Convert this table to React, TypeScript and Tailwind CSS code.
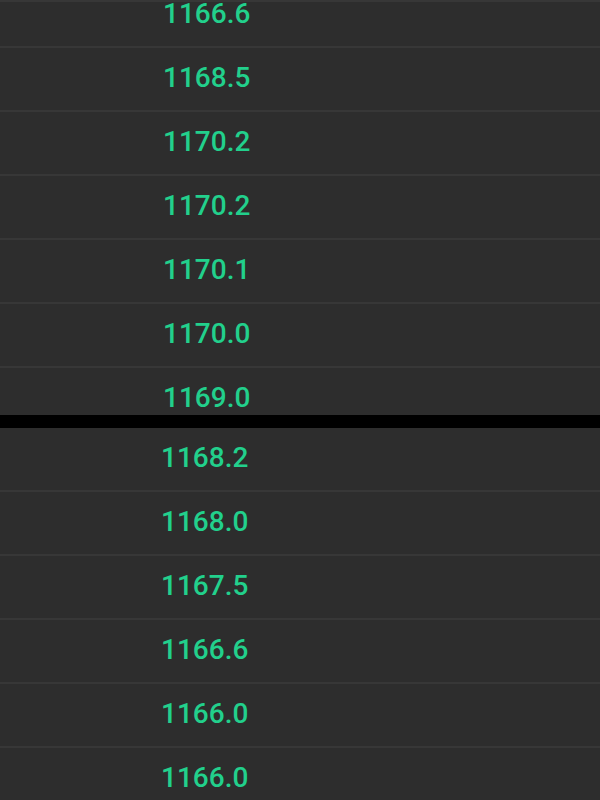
const asks = ["1166.6", "1168.5", "1170.2", "1170.2", "1170.1", "1170.0", "1169.0"];
const bids = ["1168.2", "1168.0", "1167.5", "1166.6", "1166.0", "1166.0"];

function PriceRow({ price, pad }: { price: string; pad: string }) {
  return (
    <div className={`flex h-[64px] shrink-0 items-center border-b-2 border-[#373737] pb-[3px] ${pad}`}>
      <span className="text-[28px] font-medium leading-none text-[#22d08c]">{price}</span>
    </div>
  );
}

export default function App() {
  return (
    <div className="h-[800px] w-[600px] overflow-hidden bg-[#2d2d2d] font-['Roboto',sans-serif]">
      <div className="h-[415px] overflow-hidden border-t-2 border-[#373737]">
        <div className="-mt-[18px] flex flex-col">
          {asks.map((p, i) => (
            <PriceRow key={i} price={p} pad="pl-[163px]" />
          ))}
        </div>
      </div>
      <div className="h-[13px] bg-black" />
      <div className="flex flex-col">
        {bids.map((p, i) => (
          <PriceRow key={i} price={p} pad="pl-[161px]" />
        ))}
      </div>
    </div>
  );
}
